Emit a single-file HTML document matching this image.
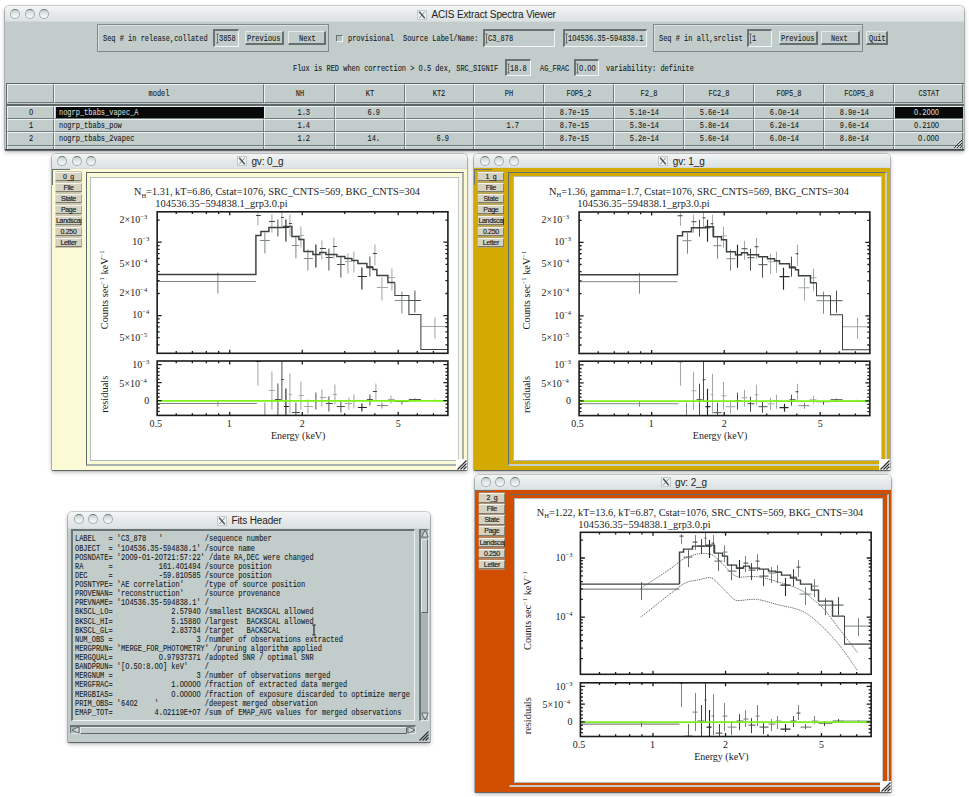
<!DOCTYPE html><html><head><meta charset="utf-8"><style>
*{margin:0;padding:0;box-sizing:border-box}
html,body{width:969px;height:797px;overflow:hidden;background:#fff;position:relative}
.abs{position:absolute}
.win{position:absolute;background:#c2cccb;box-shadow:0 0 0 0.6px rgba(60,70,70,.45),0 1px 1px rgba(0,0,0,.5),0 2px 5px rgba(0,0,0,.3);border-radius:4px 4px 0 0}
.tb{position:absolute;left:0;top:0;right:0;background:linear-gradient(#f4f6f6,#e6eaea 50%,#dde2e2);border-radius:4px 4px 0 0;border-bottom:1px solid #d3d9d9}
.tl{position:absolute;width:10px;height:10px;border-radius:50%;border:1px solid #a3acac;border-top-color:#6f7979;background:linear-gradient(#c9d0d0,#e9eeee 60%,#f6f8f8)}
.tt{position:absolute;font-family:"Liberation Sans",sans-serif;font-size:10px;letter-spacing:-0.12px;color:#222;white-space:nowrap}
.xi{position:absolute;width:10px;height:10px;border:1px solid #c3caca;background:#f0f3f3}
.xi svg{position:absolute;left:0;top:0}
.m{position:absolute;font-family:"Liberation Mono",monospace;font-size:9px;color:#151a1a;white-space:pre;line-height:9px;transform:scaleX(0.775);transform-origin:0 50%;-webkit-text-stroke:0.1px #151a1a}
.mc{transform-origin:50% 50%}
.cell{position:absolute;border-top:1px solid #eef2f2;border-left:1px solid #eef2f2;border-bottom:1px solid #6f7b7b;border-right:1px solid #6f7b7b;background:#c2cccb}
.btn{position:absolute;border-top:1px solid #e4eaea;border-left:1px solid #e4eaea;border-bottom:2px solid #66706f;border-right:2px solid #66706f;background:#c2cccb}
.inp{position:absolute;border-top:2px solid #6a7474;border-left:2px solid #6a7474;border-bottom:1px solid #f2f5f5;border-right:1px solid #f2f5f5;background:#c2cccb}
.grp{position:absolute;border:1.4px solid #7f8a8a;box-shadow:inset 1px 1px 0 #d9e0e0}
.gvb{position:absolute;background:#d6d2c2;border-top:1px solid #f4f2ea;border-left:1px solid #f4f2ea;border-bottom:1.2px solid #7f7b6c;border-right:1.2px solid #7f7b6c;box-shadow:0 0 0 0.6px #a9a596;font-family:"Liberation Sans",sans-serif;font-size:7px;letter-spacing:-0.3px;line-height:7.2px;text-align:center;color:#1a1a1a;overflow:visible;clip-path:inset(-3px 0.5px -3px 0.5px);white-space:nowrap;-webkit-text-stroke:0.15px #1a1a1a}
.ser{font-family:"Liberation Serif",serif}
</style></head><body>
<div class="win" style="left:4.5px;top:5.5px;width:959.5px;height:144.2px;"><div class="tb" style="height:16.4px"></div><div class="tl" style="left:5.7px;top:3.0px"></div><div class="tl" style="left:20.2px;top:3.0px"></div><div class="tl" style="left:34.7px;top:3.0px"></div><div class="xi" style="left:412.4px;top:4.0px"><svg width="8" height="8"><path d="M1.2 0.8L6.8 7.2" stroke="#505656" stroke-width="1.5"/><path d="M6.8 0.8L1.2 7.2" stroke="#505656" stroke-width="0.7"/></svg></div><div class="tt" style="left:426.9px;top:1.3px;line-height:16px">ACIS Extract Spectra Viewer</div><div class="grp" style="left:92.9px;top:18.2px;width:231.6px;height:28.1px;"></div><div class="m" style="left:98.7px;top:29.2px;">Seq # in release,collated</div><div class="inp" style="left:208.5px;top:23.3px;width:25.5px;height:18.2px;"></div><div class="m" style="left:214.3px;top:29.5px;">3858</div><div class="btn" style="left:240.9px;top:25.5px;width:38.2px;height:14.0px;"></div><div class="m" style="left:242.8px;top:29.5px;">Previous</div><div class="btn" style="left:283.5px;top:25.5px;width:38.4px;height:14.0px;"></div><div class="m" style="left:294.3px;top:29.5px;">Next</div><div class="inp" style="left:331.3px;top:29.1px;width:7.2px;height:7.0px;border-width:1.5px 1px 1px 1.5px;background:#b4bebe"></div><div class="m" style="left:343.0px;top:29.2px;">provisional</div><div class="m" style="left:398.3px;top:29.2px;">Source Label/Name:</div><div class="inp" style="left:478.1px;top:23.5px;width:72.0px;height:17.8px;"></div><div class="m" style="left:483.3px;top:29.5px;">C3_878</div><div class="inp" style="left:558.4px;top:23.5px;width:84.4px;height:17.8px;"></div><div class="m" style="left:563.3px;top:29.5px;">1O4536.35-594838.1</div><div class="grp" style="left:648.2px;top:18.5px;width:210.1px;height:28.2px;"></div><div class="m" style="left:654.0px;top:29.2px;">Seq # in all,srclist</div><div class="inp" style="left:742.3px;top:23.5px;width:25.2px;height:17.8px;"></div><div class="m" style="left:747.3px;top:29.5px;">1</div><div class="btn" style="left:774.1px;top:25.3px;width:39.0px;height:14.0px;"></div><div class="m" style="left:776.3px;top:29.3px;">Previous</div><div class="btn" style="left:816.5px;top:25.3px;width:39.0px;height:14.0px;"></div><div class="m" style="left:826.8px;top:29.3px;">Next</div><div class="btn" style="left:861.5px;top:25.3px;width:21.5px;height:14.0px;"></div><div class="m" style="left:864.8px;top:29.3px;">Quit</div><div class="m" style="left:288.3px;top:59.0px;">Flux is RED when correction &gt; O.5 dex, SRC_SIGNIF</div><div class="inp" style="left:500.5px;top:53.0px;width:26.0px;height:17.5px;"></div><div class="m" style="left:505.3px;top:59.0px;">18.8</div><div class="m" style="left:535.3px;top:59.0px;">AG_FRAC</div><div class="inp" style="left:569.0px;top:53.0px;width:25.5px;height:17.5px;"></div><div class="m" style="left:574.3px;top:59.0px;">O.OO</div><div class="m" style="left:601.3px;top:59.0px;">variability: definite</div><svg class="abs" style="left:210.0px;top:27.5px" width="5" height="11"><path d="M1.3 1H3.7M2.5 1V10M1.3 10H3.7" stroke="#3a4040" stroke-width="0.6" fill="none"/></svg><svg class="abs" style="left:479.0px;top:27.5px" width="5" height="11"><path d="M1.3 1H3.7M2.5 1V10M1.3 10H3.7" stroke="#3a4040" stroke-width="0.6" fill="none"/></svg><svg class="abs" style="left:559.0px;top:27.5px" width="5" height="11"><path d="M1.3 1H3.7M2.5 1V10M1.3 10H3.7" stroke="#3a4040" stroke-width="0.6" fill="none"/></svg><svg class="abs" style="left:743.0px;top:27.5px" width="5" height="11"><path d="M1.3 1H3.7M2.5 1V10M1.3 10H3.7" stroke="#3a4040" stroke-width="0.6" fill="none"/></svg><svg class="abs" style="left:501.5px;top:57.0px" width="5" height="11"><path d="M1.3 1H3.7M2.5 1V10M1.3 10H3.7" stroke="#3a4040" stroke-width="0.6" fill="none"/></svg><svg class="abs" style="left:570.0px;top:57.0px" width="5" height="11"><path d="M1.3 1H3.7M2.5 1V10M1.3 10H3.7" stroke="#3a4040" stroke-width="0.6" fill="none"/></svg><div class="abs" style="left:1.3px;top:77.1px;width:958.2px;height:67.1px;border-top:1px solid #5e6868;border-left:1.5px solid #5e6868;background:#c2cccb"></div><div class="cell" style="left:2.5px;top:78.1px;width:47.2px;height:19.6px;"></div><div class="cell" style="left:2.5px;top:100.1px;width:47.2px;height:13.4px;"></div><div class="cell" style="left:2.5px;top:113.5px;width:47.2px;height:13.4px;"></div><div class="cell" style="left:2.5px;top:126.9px;width:47.2px;height:13.2px;"></div><div class="cell" style="left:2.5px;top:140.1px;width:47.2px;height:4.1px;border-bottom:none;border-top-color:#d5dcdc"></div><div class="cell" style="left:49.7px;top:78.1px;width:210.2px;height:19.6px;"></div><div class="cell" style="left:49.7px;top:100.1px;width:210.2px;height:13.4px;"></div><div class="cell" style="left:49.7px;top:113.5px;width:210.2px;height:13.4px;"></div><div class="cell" style="left:49.7px;top:126.9px;width:210.2px;height:13.2px;"></div><div class="cell" style="left:49.7px;top:140.1px;width:210.2px;height:4.1px;border-bottom:none;border-top-color:#d5dcdc"></div><div class="cell" style="left:259.9px;top:78.1px;width:70.6px;height:19.6px;"></div><div class="cell" style="left:259.9px;top:100.1px;width:70.6px;height:13.4px;"></div><div class="cell" style="left:259.9px;top:113.5px;width:70.6px;height:13.4px;"></div><div class="cell" style="left:259.9px;top:126.9px;width:70.6px;height:13.2px;"></div><div class="cell" style="left:259.9px;top:140.1px;width:70.6px;height:4.1px;border-bottom:none;border-top-color:#d5dcdc"></div><div class="cell" style="left:330.5px;top:78.1px;width:69.5px;height:19.6px;"></div><div class="cell" style="left:330.5px;top:100.1px;width:69.5px;height:13.4px;"></div><div class="cell" style="left:330.5px;top:113.5px;width:69.5px;height:13.4px;"></div><div class="cell" style="left:330.5px;top:126.9px;width:69.5px;height:13.2px;"></div><div class="cell" style="left:330.5px;top:140.1px;width:69.5px;height:4.1px;border-bottom:none;border-top-color:#d5dcdc"></div><div class="cell" style="left:400.0px;top:78.1px;width:69.5px;height:19.6px;"></div><div class="cell" style="left:400.0px;top:100.1px;width:69.5px;height:13.4px;"></div><div class="cell" style="left:400.0px;top:113.5px;width:69.5px;height:13.4px;"></div><div class="cell" style="left:400.0px;top:126.9px;width:69.5px;height:13.2px;"></div><div class="cell" style="left:400.0px;top:140.1px;width:69.5px;height:4.1px;border-bottom:none;border-top-color:#d5dcdc"></div><div class="cell" style="left:469.5px;top:78.1px;width:69.5px;height:19.6px;"></div><div class="cell" style="left:469.5px;top:100.1px;width:69.5px;height:13.4px;"></div><div class="cell" style="left:469.5px;top:113.5px;width:69.5px;height:13.4px;"></div><div class="cell" style="left:469.5px;top:126.9px;width:69.5px;height:13.2px;"></div><div class="cell" style="left:469.5px;top:140.1px;width:69.5px;height:4.1px;border-bottom:none;border-top-color:#d5dcdc"></div><div class="cell" style="left:539.0px;top:78.1px;width:70.3px;height:19.6px;"></div><div class="cell" style="left:539.0px;top:100.1px;width:70.3px;height:13.4px;"></div><div class="cell" style="left:539.0px;top:113.5px;width:70.3px;height:13.4px;"></div><div class="cell" style="left:539.0px;top:126.9px;width:70.3px;height:13.2px;"></div><div class="cell" style="left:539.0px;top:140.1px;width:70.3px;height:4.1px;border-bottom:none;border-top-color:#d5dcdc"></div><div class="cell" style="left:609.3px;top:78.1px;width:69.8px;height:19.6px;"></div><div class="cell" style="left:609.3px;top:100.1px;width:69.8px;height:13.4px;"></div><div class="cell" style="left:609.3px;top:113.5px;width:69.8px;height:13.4px;"></div><div class="cell" style="left:609.3px;top:126.9px;width:69.8px;height:13.2px;"></div><div class="cell" style="left:609.3px;top:140.1px;width:69.8px;height:4.1px;border-bottom:none;border-top-color:#d5dcdc"></div><div class="cell" style="left:679.1px;top:78.1px;width:70.4px;height:19.6px;"></div><div class="cell" style="left:679.1px;top:100.1px;width:70.4px;height:13.4px;"></div><div class="cell" style="left:679.1px;top:113.5px;width:70.4px;height:13.4px;"></div><div class="cell" style="left:679.1px;top:126.9px;width:70.4px;height:13.2px;"></div><div class="cell" style="left:679.1px;top:140.1px;width:70.4px;height:4.1px;border-bottom:none;border-top-color:#d5dcdc"></div><div class="cell" style="left:749.5px;top:78.1px;width:69.6px;height:19.6px;"></div><div class="cell" style="left:749.5px;top:100.1px;width:69.6px;height:13.4px;"></div><div class="cell" style="left:749.5px;top:113.5px;width:69.6px;height:13.4px;"></div><div class="cell" style="left:749.5px;top:126.9px;width:69.6px;height:13.2px;"></div><div class="cell" style="left:749.5px;top:140.1px;width:69.6px;height:4.1px;border-bottom:none;border-top-color:#d5dcdc"></div><div class="cell" style="left:819.1px;top:78.1px;width:70.0px;height:19.6px;"></div><div class="cell" style="left:819.1px;top:100.1px;width:70.0px;height:13.4px;"></div><div class="cell" style="left:819.1px;top:113.5px;width:70.0px;height:13.4px;"></div><div class="cell" style="left:819.1px;top:126.9px;width:70.0px;height:13.2px;"></div><div class="cell" style="left:819.1px;top:140.1px;width:70.0px;height:4.1px;border-bottom:none;border-top-color:#d5dcdc"></div><div class="cell" style="left:889.1px;top:78.1px;width:69.9px;height:19.6px;"></div><div class="cell" style="left:889.1px;top:100.1px;width:69.9px;height:13.4px;"></div><div class="cell" style="left:889.1px;top:113.5px;width:69.9px;height:13.4px;"></div><div class="cell" style="left:889.1px;top:126.9px;width:69.9px;height:13.2px;"></div><div class="cell" style="left:889.1px;top:140.1px;width:69.9px;height:4.1px;border-bottom:none;border-top-color:#d5dcdc"></div><div class="abs" style="left:0.0px;top:143.2px;width:959.5px;height:1.0px;background:#3e4646"></div><div class="abs" style="left:1.3px;top:98.7px;width:958.2px;height:1.6px;background:#5e6868"></div><div class="m mc" style="left:154.8px;top:84.1px;width:100px;margin-left:-50px;text-align:center">model</div><div class="m mc" style="left:295.2px;top:84.1px;width:100px;margin-left:-50px;text-align:center">NH</div><div class="m mc" style="left:365.2px;top:84.1px;width:100px;margin-left:-50px;text-align:center">KT</div><div class="m mc" style="left:434.8px;top:84.1px;width:100px;margin-left:-50px;text-align:center">KT2</div><div class="m mc" style="left:504.2px;top:84.1px;width:100px;margin-left:-50px;text-align:center">PH</div><div class="m mc" style="left:574.1px;top:84.1px;width:100px;margin-left:-50px;text-align:center">FOP5_2</div><div class="m mc" style="left:644.2px;top:84.1px;width:100px;margin-left:-50px;text-align:center">F2_8</div><div class="m mc" style="left:714.3px;top:84.1px;width:100px;margin-left:-50px;text-align:center">FC2_8</div><div class="m mc" style="left:784.3px;top:84.1px;width:100px;margin-left:-50px;text-align:center">FOP5_8</div><div class="m mc" style="left:854.1px;top:84.1px;width:100px;margin-left:-50px;text-align:center">FCOP5_8</div><div class="m mc" style="left:924.0px;top:84.1px;width:100px;margin-left:-50px;text-align:center">CSTAT</div><div class="m mc" style="left:26.1px;top:103.0px;width:100px;margin-left:-50px;text-align:center;color:#151a1a;-webkit-text-stroke-color:#151a1a">O</div><div class="abs" style="left:51.2px;top:101.1px;width:208.2px;height:11.9px;background:#080a0a"></div><div class="m" style="left:54.5px;top:103.0px;color:#d0d4d4;-webkit-text-stroke-color:#d0d4d4">nogrp_tbabs_vapec_A</div><div class="m" style="left:305.5px;top:103.0px;width:80px;margin-left:-80px;text-align:right;transform-origin:100% 50%;color:#151a1a;-webkit-text-stroke-color:#151a1a">1.3</div><div class="m" style="left:375.0px;top:103.0px;width:80px;margin-left:-80px;text-align:right;transform-origin:100% 50%;color:#151a1a;-webkit-text-stroke-color:#151a1a">6.9</div><div class="m" style="left:584.3px;top:103.0px;width:80px;margin-left:-80px;text-align:right;transform-origin:100% 50%;color:#151a1a;-webkit-text-stroke-color:#151a1a">8.7e-15</div><div class="m" style="left:654.1px;top:103.0px;width:80px;margin-left:-80px;text-align:right;transform-origin:100% 50%;color:#151a1a;-webkit-text-stroke-color:#151a1a">5.1e-14</div><div class="m" style="left:724.5px;top:103.0px;width:80px;margin-left:-80px;text-align:right;transform-origin:100% 50%;color:#151a1a;-webkit-text-stroke-color:#151a1a">5.6e-14</div><div class="m" style="left:794.1px;top:103.0px;width:80px;margin-left:-80px;text-align:right;transform-origin:100% 50%;color:#151a1a;-webkit-text-stroke-color:#151a1a">6.Oe-14</div><div class="m" style="left:864.1px;top:103.0px;width:80px;margin-left:-80px;text-align:right;transform-origin:100% 50%;color:#151a1a;-webkit-text-stroke-color:#151a1a">8.9e-14</div><div class="abs" style="left:890.6px;top:101.1px;width:67.9px;height:11.9px;background:#080a0a"></div><div class="m" style="left:934.0px;top:103.0px;width:80px;margin-left:-80px;text-align:right;transform-origin:100% 50%;color:#d0d4d4;-webkit-text-stroke-color:#d0d4d4">O.2OOO</div><div class="m mc" style="left:26.1px;top:116.4px;width:100px;margin-left:-50px;text-align:center;color:#151a1a;-webkit-text-stroke-color:#151a1a">1</div><div class="m" style="left:54.5px;top:116.4px;color:#151a1a;-webkit-text-stroke-color:#151a1a">nogrp_tbabs_pow</div><div class="m" style="left:305.5px;top:116.4px;width:80px;margin-left:-80px;text-align:right;transform-origin:100% 50%;color:#151a1a;-webkit-text-stroke-color:#151a1a">1.4</div><div class="m" style="left:514.0px;top:116.4px;width:80px;margin-left:-80px;text-align:right;transform-origin:100% 50%;color:#151a1a;-webkit-text-stroke-color:#151a1a">1.7</div><div class="m" style="left:584.3px;top:116.4px;width:80px;margin-left:-80px;text-align:right;transform-origin:100% 50%;color:#151a1a;-webkit-text-stroke-color:#151a1a">8.7e-15</div><div class="m" style="left:654.1px;top:116.4px;width:80px;margin-left:-80px;text-align:right;transform-origin:100% 50%;color:#151a1a;-webkit-text-stroke-color:#151a1a">5.3e-14</div><div class="m" style="left:724.5px;top:116.4px;width:80px;margin-left:-80px;text-align:right;transform-origin:100% 50%;color:#151a1a;-webkit-text-stroke-color:#151a1a">5.8e-14</div><div class="m" style="left:794.1px;top:116.4px;width:80px;margin-left:-80px;text-align:right;transform-origin:100% 50%;color:#151a1a;-webkit-text-stroke-color:#151a1a">6.2e-14</div><div class="m" style="left:864.1px;top:116.4px;width:80px;margin-left:-80px;text-align:right;transform-origin:100% 50%;color:#151a1a;-webkit-text-stroke-color:#151a1a">9.6e-14</div><div class="m" style="left:934.0px;top:116.4px;width:80px;margin-left:-80px;text-align:right;transform-origin:100% 50%;color:#151a1a;-webkit-text-stroke-color:#151a1a">O.21OO</div><div class="m mc" style="left:26.1px;top:129.7px;width:100px;margin-left:-50px;text-align:center;color:#151a1a;-webkit-text-stroke-color:#151a1a">2</div><div class="m" style="left:54.5px;top:129.7px;color:#151a1a;-webkit-text-stroke-color:#151a1a">nogrp_tbabs_2vapec</div><div class="m" style="left:305.5px;top:129.7px;width:80px;margin-left:-80px;text-align:right;transform-origin:100% 50%;color:#151a1a;-webkit-text-stroke-color:#151a1a">1.2</div><div class="m" style="left:375.0px;top:129.7px;width:80px;margin-left:-80px;text-align:right;transform-origin:100% 50%;color:#151a1a;-webkit-text-stroke-color:#151a1a">14.</div><div class="m" style="left:444.5px;top:129.7px;width:80px;margin-left:-80px;text-align:right;transform-origin:100% 50%;color:#151a1a;-webkit-text-stroke-color:#151a1a">6.9</div><div class="m" style="left:584.3px;top:129.7px;width:80px;margin-left:-80px;text-align:right;transform-origin:100% 50%;color:#151a1a;-webkit-text-stroke-color:#151a1a">8.7e-15</div><div class="m" style="left:654.1px;top:129.7px;width:80px;margin-left:-80px;text-align:right;transform-origin:100% 50%;color:#151a1a;-webkit-text-stroke-color:#151a1a">5.2e-14</div><div class="m" style="left:724.5px;top:129.7px;width:80px;margin-left:-80px;text-align:right;transform-origin:100% 50%;color:#151a1a;-webkit-text-stroke-color:#151a1a">5.6e-14</div><div class="m" style="left:794.1px;top:129.7px;width:80px;margin-left:-80px;text-align:right;transform-origin:100% 50%;color:#151a1a;-webkit-text-stroke-color:#151a1a">6.Oe-14</div><div class="m" style="left:864.1px;top:129.7px;width:80px;margin-left:-80px;text-align:right;transform-origin:100% 50%;color:#151a1a;-webkit-text-stroke-color:#151a1a">8.8e-14</div><div class="m" style="left:934.0px;top:129.7px;width:80px;margin-left:-80px;text-align:right;transform-origin:100% 50%;color:#151a1a;-webkit-text-stroke-color:#151a1a">O.OOO</div><svg class="abs" style="left:948.5px;top:133.5px" width="10" height="10"><path d="M1 9L9 1M4 9L9 4M7 9L9 7" stroke="#333" stroke-width="1"/></svg></div>
<div class="win" style="left:51.6px;top:154px;width:415.4px;height:316px;background:transparent"><div class="abs" style="left:0;top:13.5px;right:0;bottom:0;background:#fafbd6"></div><div class="tb" style="height:14.5px"></div><div class="tl" style="left:5.7px;top:2px"></div><div class="tl" style="left:20.2px;top:2px"></div><div class="tl" style="left:34.7px;top:2px"></div><div class="xi" style="left:185.3px;top:2.05px"><svg width="8" height="8"><path d="M1.2 0.8L6.8 7.2" stroke="#505656" stroke-width="1.5"/><path d="M6.8 0.8L1.2 7.2" stroke="#505656" stroke-width="0.7"/></svg></div><div class="tt" style="left:199.8px;top:0.8px;line-height:14.5px">gv: 0_g</div><div class="abs" style="left:0;top:15px;width:18px;height:16px;border-top:1.5px solid #6b7373;border-left:1.5px solid #6b7373"></div><div class="gvb" style="left:3.4px;top:18px;width:27px;height:9.2px">0_g</div><div class="gvb" style="left:3.4px;top:29.03px;width:27px;height:9.2px">File</div><div class="gvb" style="left:3.4px;top:40.06px;width:27px;height:9.2px">State</div><div class="gvb" style="left:3.4px;top:51.09px;width:27px;height:9.2px">Page</div><div class="gvb" style="left:3.4px;top:62.12px;width:27px;height:9.2px">Landscape</div><div class="gvb" style="left:3.4px;top:73.15px;width:27px;height:9.2px">0.250</div><div class="gvb" style="left:3.4px;top:84.18px;width:27px;height:9.2px">Letter</div><div class="abs" style="left:34px;top:18.3px;width:378.8px;height:293.5px;border-top:1.8px solid #5f6868;border-left:1.8px solid #5f6868;border-bottom:2px solid #a9b1b0;border-right:2px solid #a9b1b0"></div><div class="abs" style="left:38.8px;top:22.6px;width:368.6px;height:284.9px;background:#fff;border-left:1px solid #b4bcbc;border-top:1px solid #b4bcbc;border-right:1px solid #c3caca;border-bottom:1px solid #b0b8b8"></div><svg class="abs" style="left:404.4px;top:305px" width="11" height="11"><rect width="11" height="11" fill="#fff"/><path d="M1.5 10.5L10.5 1.5M4.5 10.5L10.5 4.5M7.5 10.5L10.5 7.5" stroke="#2a2e2e" stroke-width="1.2"/></svg><svg class="abs" style="left:0;top:0" width="415.4" height="316" font-family="Liberation Serif" fill="#1a1d1d"><g transform="translate(-51.6 -154)"><text x="276.6" y="195" text-anchor="middle" font-size="10.3">N<tspan font-size="6.5" dy="2.5">H</tspan><tspan dy="-2.5">=</tspan>1.31, kT=6.86, Cstat=1076, SRC_CNTS=569, BKG_CNTS=304</text><text x="221.1" y="206.8" text-anchor="middle" font-size="10.45">104536.35&#8722;594838.1_grp3.0.pi</text><clipPath id="cm51"><rect x="156.75" y="211.8" width="290.75" height="141.5"/></clipPath><g clip-path="url(#cm51)" fill="none"><path d="M217.5 272.5V293.5" stroke="#7f8686" stroke-width="1.0"/><path d="M157.5 281.5H255.5" stroke="#7f8686" stroke-width="1.0"/><path d="M257.5 212.5V225.5" stroke="#a3a9a9" stroke-width="1.05"/><path d="M255.5 215.5H260.5" stroke="#3f4444" stroke-width="1.05"/><path d="M264.5 232.5V253.5" stroke="#7f8686" stroke-width="1.0"/><path d="M259.5 240.5H269.5" stroke="#7f8686" stroke-width="1.0"/><path d="M271.5 214.5V232.5" stroke="#a3a9a9" stroke-width="1.05"/><path d="M268.5 221.5H274.5" stroke="#3f4444" stroke-width="1.05"/><path d="M277.5 219.5V236.5" stroke="#4a5050" stroke-width="1.0"/><path d="M274.5 227.5H280.5" stroke="#4a5050" stroke-width="1.0"/><path d="M281.5 211.5V227.5" stroke="#a3a9a9" stroke-width="1.05"/><path d="M280.5 217.5H283.5" stroke="#3f4444" stroke-width="1.05"/><path d="M285.5 219.5V241.5" stroke="#222626" stroke-width="1.15"/><path d="M283.5 227.5H288.5" stroke="#222626" stroke-width="1.15"/><path d="M289.5 214.5V236.5" stroke="#a3a9a9" stroke-width="1.05"/><path d="M288.5 223.5H291.5" stroke="#3f4444" stroke-width="1.05"/><path d="M295.5 235.5V258.5" stroke="#7f8686" stroke-width="1.0"/><path d="M291.5 245.5H298.5" stroke="#7f8686" stroke-width="1.0"/><path d="M300.5 226.5V247.5" stroke="#a3a9a9" stroke-width="1.05"/><path d="M298.5 235.5H303.5" stroke="#a3a9a9" stroke-width="1.05"/><path d="M307.5 249.5V270.5" stroke="#7f8686" stroke-width="1.0"/><path d="M303.5 258.5H312.5" stroke="#7f8686" stroke-width="1.0"/><path d="M315.5 244.5V267.5" stroke="#222626" stroke-width="1.15"/><path d="M312.5 254.5H319.5" stroke="#222626" stroke-width="1.15"/><path d="M321.5 240.5V259.5" stroke="#a3a9a9" stroke-width="1.05"/><path d="M319.5 248.5H325.5" stroke="#3f4444" stroke-width="1.05"/><path d="M328.5 248.5V270.5" stroke="#4a5050" stroke-width="1.0"/><path d="M325.5 257.5H332.5" stroke="#4a5050" stroke-width="1.0"/><path d="M333.5 237.5V258.5" stroke="#a3a9a9" stroke-width="1.05"/><path d="M332.5 246.5H336.5" stroke="#3f4444" stroke-width="1.05"/><path d="M340.5 256.5V277.5" stroke="#4a5050" stroke-width="1.0"/><path d="M336.5 264.5H344.5" stroke="#4a5050" stroke-width="1.0"/><path d="M347.5 253.5V273.5" stroke="#a3a9a9" stroke-width="1.05"/><path d="M344.5 261.5H351.5" stroke="#a3a9a9" stroke-width="1.05"/><path d="M353.5 251.5V272.5" stroke="#a3a9a9" stroke-width="1.05"/><path d="M351.5 260.5H357.5" stroke="#3f4444" stroke-width="1.05"/><path d="M361.5 267.5V289.5" stroke="#222626" stroke-width="1.15"/><path d="M357.5 276.5H366.5" stroke="#222626" stroke-width="1.15"/><path d="M369.5 256.5V276.5" stroke="#4a5050" stroke-width="1.0"/><path d="M366.5 266.5H372.5" stroke="#4a5050" stroke-width="1.0"/><path d="M374.5 244.5V265.5" stroke="#a3a9a9" stroke-width="1.05"/><path d="M372.5 253.5H376.5" stroke="#3f4444" stroke-width="1.05"/><path d="M381.5 277.5V300.5" stroke="#a3a9a9" stroke-width="1.05"/><path d="M376.5 287.5H387.5" stroke="#a3a9a9" stroke-width="1.05"/><path d="M391.5 268.5V290.5" stroke="#a3a9a9" stroke-width="1.05"/><path d="M387.5 277.5H394.5" stroke="#a3a9a9" stroke-width="1.05"/><path d="M401.5 291.5V313.5" stroke="#7f8686" stroke-width="1.0"/><path d="M394.5 300.5H408.5" stroke="#7f8686" stroke-width="1.0"/><path d="M414.5 290.5V312.5" stroke="#4a5050" stroke-width="1.0"/><path d="M408.5 300.5H420.5" stroke="#4a5050" stroke-width="1.0"/><path d="M434.5 317.5V338.5" stroke="#a3a9a9" stroke-width="1.05"/><path d="M420.5 326.5H447.5" stroke="#a3a9a9" stroke-width="1.05"/><path d="M157.5 274.5H255.5V235.5H260.5V231.5H268.5V227.5H274.5V227.5H280.5V227.5H283.5V226.5H291.5V236.5H298.5V239.5H303.5V251.5H312.5V254.5H319.5V252.5H325.5V254.5H336.5V256.5H344.5V258.5H351.5V260.5H357.5V263.5H366.5V267.5H372.5V269.5H376.5V275.5H387.5V282.5H394.5" stroke="#3c4141" stroke-width="1.45"/><path d="M394.5 282.5V295.5H408.5V314.5H420.5V349.5H447.5" stroke="#3c4141" stroke-width="1.05"/></g><clipPath id="cr51"><rect x="156.75" y="361" width="290.75" height="54.4"/></clipPath><g clip-path="url(#cr51)" fill="none"><path d="M217.5 400.5V406.5" stroke="#7f8686" stroke-width="1.0"/><path d="M157.5 403.5H256.5" stroke="#7f8686" stroke-width="1.0"/><path d="M257.5 361.5V385.5" stroke="#a3a9a9" stroke-width="1.05"/><path d="M255.5 361.5H260.5" stroke="#3f4444" stroke-width="1.05"/><path d="M264.5 402.5V415.5" stroke="#7f8686" stroke-width="1.0"/><path d="M260.5 415.5H268.5" stroke="#7f8686" stroke-width="1.0"/><path d="M271.5 371.5V409.5" stroke="#a3a9a9" stroke-width="1.05"/><path d="M268.5 390.5H274.5" stroke="#a3a9a9" stroke-width="1.05"/><path d="M277.5 383.5V415.5" stroke="#4a5050" stroke-width="1.0"/><path d="M274.5 399.5H280.5" stroke="#4a5050" stroke-width="1.0"/><path d="M281.5 361.5V400.5" stroke="#4a5050" stroke-width="1.0"/><path d="M280.5 379.5H283.5" stroke="#4a5050" stroke-width="1.0"/><path d="M285.5 388.5V415.5" stroke="#222626" stroke-width="1.15"/><path d="M283.5 406.5H288.5" stroke="#222626" stroke-width="1.15"/><path d="M289.5 373.5V413.5" stroke="#a3a9a9" stroke-width="1.05"/><path d="M288.5 394.5H291.5" stroke="#a3a9a9" stroke-width="1.05"/><path d="M295.5 402.5V415.5" stroke="#4a5050" stroke-width="1.0"/><path d="M291.5 412.5H299.5" stroke="#4a5050" stroke-width="1.0"/><path d="M300.5 381.5V409.5" stroke="#a3a9a9" stroke-width="1.05"/><path d="M298.5 395.5H303.5" stroke="#a3a9a9" stroke-width="1.05"/><path d="M307.5 399.5V413.5" stroke="#a3a9a9" stroke-width="1.05"/><path d="M303.5 406.5H312.5" stroke="#a3a9a9" stroke-width="1.05"/><path d="M315.5 392.5V409.5" stroke="#4a5050" stroke-width="1.0"/><path d="M312.5 400.5H319.5" stroke="#4a5050" stroke-width="1.0"/><path d="M321.5 389.5V406.5" stroke="#a3a9a9" stroke-width="1.05"/><path d="M319.5 397.5H325.5" stroke="#a3a9a9" stroke-width="1.05"/><path d="M328.5 396.5V411.5" stroke="#4a5050" stroke-width="1.0"/><path d="M325.5 403.5H332.5" stroke="#4a5050" stroke-width="1.0"/><path d="M334.5 384.5V404.5" stroke="#a3a9a9" stroke-width="1.05"/><path d="M332.5 394.5H336.5" stroke="#a3a9a9" stroke-width="1.05"/><path d="M340.5 401.5V412.5" stroke="#4a5050" stroke-width="1.0"/><path d="M336.5 406.5H344.5" stroke="#4a5050" stroke-width="1.0"/><path d="M348.5 397.5V409.5" stroke="#a3a9a9" stroke-width="1.05"/><path d="M344.5 403.5H351.5" stroke="#a3a9a9" stroke-width="1.05"/><path d="M353.5 394.5V408.5" stroke="#a3a9a9" stroke-width="1.05"/><path d="M351.5 400.5H357.5" stroke="#a3a9a9" stroke-width="1.05"/><path d="M361.5 403.5V411.5" stroke="#222626" stroke-width="1.15"/><path d="M357.5 407.5H366.5" stroke="#222626" stroke-width="1.15"/><path d="M369.5 394.5V405.5" stroke="#4a5050" stroke-width="1.0"/><path d="M366.5 399.5H372.5" stroke="#4a5050" stroke-width="1.0"/><path d="M375.5 383.5V399.5" stroke="#a3a9a9" stroke-width="1.05"/><path d="M372.5 391.5H376.5" stroke="#3f4444" stroke-width="1.05"/><path d="M381.5 402.5V408.5" stroke="#7f8686" stroke-width="1.0"/><path d="M376.5 405.5H387.5" stroke="#7f8686" stroke-width="1.0"/><path d="M390.5 395.5V403.5" stroke="#a3a9a9" stroke-width="1.05"/><path d="M387.5 399.5H394.5" stroke="#a3a9a9" stroke-width="1.05"/><path d="M401.5 400.5V404.5" stroke="#4a5050" stroke-width="1.0"/><path d="M394.5 401.5H408.5" stroke="#4a5050" stroke-width="1.0"/><path d="M414.5 398.5V400.5" stroke="#4a5050" stroke-width="1.0"/><path d="M408.5 399.5H420.5" stroke="#4a5050" stroke-width="1.0"/><path d="M434.5 399.5V401.5" stroke="#a3a9a9" stroke-width="1.05"/><path d="M419.5 400.5H447.5" stroke="#a3a9a9" stroke-width="1.05"/><path d="M156.75 400.9H447.5" stroke="#7cf218" stroke-width="1.7"/></g><rect x="156.75" y="211.8" width="290.75" height="141.5" fill="none" stroke="#1a1d1d" stroke-width="1.6"/><rect x="156.75" y="361" width="290.75" height="54.4" fill="none" stroke="#1a1d1d" stroke-width="1.6"/><path d="M175.84 211.8v2.2M175.84 353.3v-2.2M191.97 211.8v2.2M191.97 353.3v-2.2M205.95 211.8v2.2M205.95 353.3v-2.2M218.28 211.8v2.2M218.28 353.3v-2.2M229.31 211.8v3.5M229.31 353.3v-3.5M301.88 211.8v3.5M301.88 353.3v-3.5M344.32 211.8v2.2M344.32 353.3v-2.2M374.44 211.8v2.2M374.44 353.3v-2.2M397.8 211.8v3.5M397.8 353.3v-3.5M416.89 211.8v2.2M416.89 353.3v-2.2M433.02 211.8v2.2M433.02 353.3v-2.2M175.84 361v2.2M175.84 415.4v-2.2M191.97 361v2.2M191.97 415.4v-2.2M205.95 361v2.2M205.95 415.4v-2.2M218.28 361v2.2M218.28 415.4v-2.2M229.31 361v3.5M229.31 415.4v-3.5M301.88 361v3.5M301.88 415.4v-3.5M344.32 361v2.2M344.32 415.4v-2.2M374.44 361v2.2M374.44 415.4v-2.2M397.8 361v3.5M397.8 415.4v-3.5M416.89 361v2.2M416.89 415.4v-2.2M433.02 361v2.2M433.02 415.4v-2.2M156.75 344.81h2.5M447.5 344.81h-2.5M156.75 337.7h2.5M447.5 337.7h-2.5M156.75 331.88h2.5M447.5 331.88h-2.5M156.75 326.97h2.5M447.5 326.97h-2.5M156.75 322.71h2.5M447.5 322.71h-2.5M156.75 318.96h2.5M447.5 318.96h-2.5M156.75 315.6h4.5M447.5 315.6h-4.5M156.75 293.5h2.5M447.5 293.5h-2.5M156.75 280.58h2.5M447.5 280.58h-2.5M156.75 271.41h2.5M447.5 271.41h-2.5M156.75 264.3h2.5M447.5 264.3h-2.5M156.75 258.48h2.5M447.5 258.48h-2.5M156.75 253.57h2.5M447.5 253.57h-2.5M156.75 249.31h2.5M447.5 249.31h-2.5M156.75 245.56h2.5M447.5 245.56h-2.5M156.75 242.2h4.5M447.5 242.2h-4.5M156.75 220.1h2.5M447.5 220.1h-2.5M156.75 411.37h2.5M447.5 411.37h-2.5M156.75 407.78h2.5M447.5 407.78h-2.5M156.75 404.19h2.5M447.5 404.19h-2.5M156.75 400.6h4.5M447.5 400.6h-4.5M156.75 397.01h2.5M447.5 397.01h-2.5M156.75 393.42h2.5M447.5 393.42h-2.5M156.75 389.83h2.5M447.5 389.83h-2.5M156.75 386.24h2.5M447.5 386.24h-2.5M156.75 382.65h4.5M447.5 382.65h-4.5M156.75 379.06h2.5M447.5 379.06h-2.5M156.75 375.47h2.5M447.5 375.47h-2.5M156.75 371.88h2.5M447.5 371.88h-2.5M156.75 368.29h2.5M447.5 368.29h-2.5M156.75 364.7h4.5M447.5 364.7h-4.5" stroke="#1a1d1d" stroke-width="1.3" fill="none"/><text x="146.75" y="222.9" text-anchor="end" font-size="10">2&#215;10<tspan font-size="6.5" dy="-4">&#8722;3</tspan></text><text x="148.75" y="245" text-anchor="end" font-size="10">10<tspan font-size="6.5" dy="-4">&#8722;3</tspan></text><text x="146.75" y="267.1" text-anchor="end" font-size="10">5&#215;10<tspan font-size="6.5" dy="-4">&#8722;4</tspan></text><text x="146.75" y="296.3" text-anchor="end" font-size="10">2&#215;10<tspan font-size="6.5" dy="-4">&#8722;4</tspan></text><text x="148.75" y="318.4" text-anchor="end" font-size="10">10<tspan font-size="6.5" dy="-4">&#8722;4</tspan></text><text x="146.75" y="340.5" text-anchor="end" font-size="10">5&#215;10<tspan font-size="6.5" dy="-4">&#8722;5</tspan></text><text x="148.75" y="368.2" text-anchor="end" font-size="10">10<tspan font-size="6.5" dy="-4">&#8722;3</tspan></text><text x="146.45" y="387.05" text-anchor="end" font-size="10">5&#215;10<tspan font-size="6.5" dy="-4">&#8722;4</tspan></text><text x="148.75" y="404.1" text-anchor="end" font-size="10">0</text><text x="155.25" y="426.9" text-anchor="middle" font-size="10">0.5</text><text x="228.81" y="426.9" text-anchor="middle" font-size="10">1</text><text x="301.88" y="426.9" text-anchor="middle" font-size="10">2</text><text x="397.8" y="426.9" text-anchor="middle" font-size="10">5</text><text x="297.75" y="438.9" text-anchor="middle" font-size="10">Energy (keV)</text><text transform="translate(107.55 289.85) rotate(-90)" text-anchor="middle" font-size="10.35">Counts sec<tspan font-size="6.5" dy="-4">&#8722;1</tspan><tspan dy="4"> keV</tspan><tspan font-size="6.5" dy="-4">&#8722;1</tspan></text><text transform="translate(107.75 394.3) rotate(-90)" text-anchor="middle" font-size="10.45">residuals</text></g></svg></div>
<div class="win" style="left:474px;top:153.8px;width:416px;height:316.2px;background:transparent"><div class="abs" style="left:0;top:13.5px;right:0;bottom:0;background:#d3ab00"></div><div class="tb" style="height:14.5px"></div><div class="tl" style="left:5.7px;top:2px"></div><div class="tl" style="left:20.2px;top:2px"></div><div class="tl" style="left:34.7px;top:2px"></div><div class="xi" style="left:184.2px;top:2.05px"><svg width="8" height="8"><path d="M1.2 0.8L6.8 7.2" stroke="#505656" stroke-width="1.5"/><path d="M6.8 0.8L1.2 7.2" stroke="#505656" stroke-width="0.7"/></svg></div><div class="tt" style="left:198.7px;top:0.8px;line-height:14.5px">gv: 1_g</div><div class="abs" style="left:0;top:15px;width:18px;height:16px;border-top:1.5px solid #6b7373;border-left:1.5px solid #6b7373"></div><div class="gvb" style="left:3.4px;top:18px;width:27px;height:9.2px">1_g</div><div class="gvb" style="left:3.4px;top:29.03px;width:27px;height:9.2px">File</div><div class="gvb" style="left:3.4px;top:40.06px;width:27px;height:9.2px">State</div><div class="gvb" style="left:3.4px;top:51.09px;width:27px;height:9.2px">Page</div><div class="gvb" style="left:3.4px;top:62.12px;width:27px;height:9.2px">Landscape</div><div class="gvb" style="left:3.4px;top:73.15px;width:27px;height:9.2px">0.250</div><div class="gvb" style="left:3.4px;top:84.18px;width:27px;height:9.2px">Letter</div><div class="abs" style="left:34px;top:18.3px;width:379.4px;height:293.7px;border-top:1.8px solid #636d6d;border-left:1.8px solid #636d6d;border-bottom:2px solid #c4cccc;border-right:2px solid #c4cccc"></div><div class="abs" style="left:38.8px;top:22.6px;width:369.2px;height:285.1px;background:#fff;border-left:1px solid #b4bcbc;border-top:1px solid #b4bcbc;border-right:1px solid #c3caca;border-bottom:1px solid #b0b8b8"></div><svg class="abs" style="left:405px;top:305.2px" width="11" height="11"><rect width="11" height="11" fill="#fff"/><path d="M1.5 10.5L10.5 1.5M4.5 10.5L10.5 4.5M7.5 10.5L10.5 7.5" stroke="#2a2e2e" stroke-width="1.2"/></svg><svg class="abs" style="left:0;top:0" width="416" height="316.2" font-family="Liberation Serif" fill="#1a1d1d"><g transform="translate(-474 -153.8)"><text x="699" y="194.8" text-anchor="middle" font-size="10.3">N<tspan font-size="6.5" dy="2.5">H</tspan><tspan dy="-2.5">=</tspan>1.36, gamma=1.7, Cstat=1076, SRC_CNTS=569, BKG_CNTS=304</text><text x="643.5" y="206.6" text-anchor="middle" font-size="10.45">104536.35&#8722;594838.1_grp3.0.pi</text><clipPath id="cm474"><rect x="579.1" y="211.8" width="290.75" height="141.5"/></clipPath><g clip-path="url(#cm474)" fill="none"><path d="M639.5 272.5V293.5" stroke="#7f8686" stroke-width="1.0"/><path d="M579.5 281.5H677.5" stroke="#7f8686" stroke-width="1.0"/><path d="M680.5 212.5V225.5" stroke="#a3a9a9" stroke-width="1.05"/><path d="M677.5 215.5H682.5" stroke="#3f4444" stroke-width="1.05"/><path d="M687.5 232.5V253.5" stroke="#7f8686" stroke-width="1.0"/><path d="M682.5 240.5H691.5" stroke="#7f8686" stroke-width="1.0"/><path d="M693.5 214.5V232.5" stroke="#a3a9a9" stroke-width="1.05"/><path d="M691.5 221.5H696.5" stroke="#3f4444" stroke-width="1.05"/><path d="M699.5 219.5V236.5" stroke="#4a5050" stroke-width="1.0"/><path d="M696.5 227.5H702.5" stroke="#4a5050" stroke-width="1.0"/><path d="M703.5 211.5V227.5" stroke="#a3a9a9" stroke-width="1.05"/><path d="M702.5 217.5H705.5" stroke="#3f4444" stroke-width="1.05"/><path d="M707.5 219.5V241.5" stroke="#222626" stroke-width="1.15"/><path d="M705.5 227.5H710.5" stroke="#222626" stroke-width="1.15"/><path d="M712.5 214.5V236.5" stroke="#a3a9a9" stroke-width="1.05"/><path d="M710.5 223.5H713.5" stroke="#3f4444" stroke-width="1.05"/><path d="M717.5 235.5V258.5" stroke="#7f8686" stroke-width="1.0"/><path d="M713.5 245.5H721.5" stroke="#7f8686" stroke-width="1.0"/><path d="M723.5 226.5V247.5" stroke="#a3a9a9" stroke-width="1.05"/><path d="M721.5 235.5H726.5" stroke="#a3a9a9" stroke-width="1.05"/><path d="M730.5 249.5V270.5" stroke="#7f8686" stroke-width="1.0"/><path d="M726.5 258.5H735.5" stroke="#7f8686" stroke-width="1.0"/><path d="M737.5 244.5V267.5" stroke="#222626" stroke-width="1.15"/><path d="M735.5 254.5H741.5" stroke="#222626" stroke-width="1.15"/><path d="M744.5 240.5V259.5" stroke="#a3a9a9" stroke-width="1.05"/><path d="M741.5 248.5H747.5" stroke="#3f4444" stroke-width="1.05"/><path d="M750.5 248.5V270.5" stroke="#4a5050" stroke-width="1.0"/><path d="M747.5 257.5H754.5" stroke="#4a5050" stroke-width="1.0"/><path d="M756.5 237.5V258.5" stroke="#a3a9a9" stroke-width="1.05"/><path d="M754.5 246.5H758.5" stroke="#3f4444" stroke-width="1.05"/><path d="M762.5 256.5V277.5" stroke="#4a5050" stroke-width="1.0"/><path d="M758.5 264.5H767.5" stroke="#4a5050" stroke-width="1.0"/><path d="M770.5 253.5V273.5" stroke="#a3a9a9" stroke-width="1.05"/><path d="M767.5 261.5H774.5" stroke="#a3a9a9" stroke-width="1.05"/><path d="M776.5 251.5V272.5" stroke="#a3a9a9" stroke-width="1.05"/><path d="M774.5 260.5H779.5" stroke="#3f4444" stroke-width="1.05"/><path d="M783.5 267.5V289.5" stroke="#222626" stroke-width="1.15"/><path d="M779.5 276.5H789.5" stroke="#222626" stroke-width="1.15"/><path d="M791.5 256.5V276.5" stroke="#4a5050" stroke-width="1.0"/><path d="M789.5 266.5H795.5" stroke="#4a5050" stroke-width="1.0"/><path d="M797.5 244.5V265.5" stroke="#a3a9a9" stroke-width="1.05"/><path d="M795.5 253.5H798.5" stroke="#3f4444" stroke-width="1.05"/><path d="M804.5 277.5V300.5" stroke="#a3a9a9" stroke-width="1.05"/><path d="M798.5 287.5H809.5" stroke="#a3a9a9" stroke-width="1.05"/><path d="M813.5 268.5V290.5" stroke="#a3a9a9" stroke-width="1.05"/><path d="M809.5 277.5H816.5" stroke="#a3a9a9" stroke-width="1.05"/><path d="M823.5 291.5V313.5" stroke="#7f8686" stroke-width="1.0"/><path d="M816.5 300.5H830.5" stroke="#7f8686" stroke-width="1.0"/><path d="M836.5 290.5V312.5" stroke="#4a5050" stroke-width="1.0"/><path d="M830.5 300.5H842.5" stroke="#4a5050" stroke-width="1.0"/><path d="M857.5 317.5V338.5" stroke="#a3a9a9" stroke-width="1.05"/><path d="M842.5 326.5H869.5" stroke="#a3a9a9" stroke-width="1.05"/><path d="M579.5 274.5H677.5V235.5H682.5V231.5H691.5V227.5H696.5V227.5H702.5V227.5H705.5V226.5H713.5V236.5H721.5V239.5H726.5V251.5H735.5V254.5H741.5V252.5H747.5V254.5H758.5V256.5H767.5V258.5H774.5V260.5H779.5V263.5H789.5V267.5H795.5V269.5H798.5V275.5H810.5V282.5H816.5" stroke="#3c4141" stroke-width="1.45"/><path d="M816.5 282.5V295.5H830.5V314.5H842.5V349.5H869.5" stroke="#3c4141" stroke-width="1.05"/></g><clipPath id="cr474"><rect x="579.1" y="361" width="290.75" height="54.4"/></clipPath><g clip-path="url(#cr474)" fill="none"><path d="M639.5 400.5V406.5" stroke="#7f8686" stroke-width="1.0"/><path d="M579.5 403.5H678.5" stroke="#7f8686" stroke-width="1.0"/><path d="M680.5 361.5V385.5" stroke="#a3a9a9" stroke-width="1.05"/><path d="M677.5 361.5H682.5" stroke="#3f4444" stroke-width="1.05"/><path d="M686.5 402.5V415.5" stroke="#7f8686" stroke-width="1.0"/><path d="M682.5 415.5H691.5" stroke="#7f8686" stroke-width="1.0"/><path d="M693.5 371.5V409.5" stroke="#a3a9a9" stroke-width="1.05"/><path d="M691.5 390.5H696.5" stroke="#a3a9a9" stroke-width="1.05"/><path d="M699.5 383.5V415.5" stroke="#4a5050" stroke-width="1.0"/><path d="M696.5 399.5H702.5" stroke="#4a5050" stroke-width="1.0"/><path d="M703.5 361.5V400.5" stroke="#4a5050" stroke-width="1.0"/><path d="M702.5 379.5H705.5" stroke="#4a5050" stroke-width="1.0"/><path d="M707.5 388.5V415.5" stroke="#222626" stroke-width="1.15"/><path d="M705.5 406.5H710.5" stroke="#222626" stroke-width="1.15"/><path d="M712.5 373.5V413.5" stroke="#a3a9a9" stroke-width="1.05"/><path d="M710.5 394.5H713.5" stroke="#a3a9a9" stroke-width="1.05"/><path d="M717.5 402.5V415.5" stroke="#4a5050" stroke-width="1.0"/><path d="M713.5 412.5H721.5" stroke="#4a5050" stroke-width="1.0"/><path d="M723.5 381.5V409.5" stroke="#a3a9a9" stroke-width="1.05"/><path d="M721.5 395.5H726.5" stroke="#a3a9a9" stroke-width="1.05"/><path d="M730.5 399.5V413.5" stroke="#a3a9a9" stroke-width="1.05"/><path d="M725.5 406.5H735.5" stroke="#a3a9a9" stroke-width="1.05"/><path d="M737.5 392.5V409.5" stroke="#4a5050" stroke-width="1.0"/><path d="M735.5 400.5H741.5" stroke="#4a5050" stroke-width="1.0"/><path d="M744.5 389.5V406.5" stroke="#a3a9a9" stroke-width="1.05"/><path d="M741.5 397.5H747.5" stroke="#a3a9a9" stroke-width="1.05"/><path d="M750.5 396.5V411.5" stroke="#4a5050" stroke-width="1.0"/><path d="M747.5 403.5H754.5" stroke="#4a5050" stroke-width="1.0"/><path d="M756.5 384.5V404.5" stroke="#a3a9a9" stroke-width="1.05"/><path d="M754.5 394.5H758.5" stroke="#a3a9a9" stroke-width="1.05"/><path d="M762.5 401.5V412.5" stroke="#4a5050" stroke-width="1.0"/><path d="M758.5 406.5H767.5" stroke="#4a5050" stroke-width="1.0"/><path d="M770.5 397.5V409.5" stroke="#a3a9a9" stroke-width="1.05"/><path d="M767.5 403.5H774.5" stroke="#a3a9a9" stroke-width="1.05"/><path d="M776.5 394.5V408.5" stroke="#a3a9a9" stroke-width="1.05"/><path d="M774.5 400.5H779.5" stroke="#a3a9a9" stroke-width="1.05"/><path d="M784.5 403.5V411.5" stroke="#222626" stroke-width="1.15"/><path d="M779.5 407.5H788.5" stroke="#222626" stroke-width="1.15"/><path d="M791.5 394.5V405.5" stroke="#4a5050" stroke-width="1.0"/><path d="M789.5 399.5H795.5" stroke="#4a5050" stroke-width="1.0"/><path d="M797.5 383.5V399.5" stroke="#a3a9a9" stroke-width="1.05"/><path d="M795.5 391.5H798.5" stroke="#3f4444" stroke-width="1.05"/><path d="M804.5 402.5V408.5" stroke="#7f8686" stroke-width="1.0"/><path d="M798.5 405.5H809.5" stroke="#7f8686" stroke-width="1.0"/><path d="M813.5 395.5V403.5" stroke="#a3a9a9" stroke-width="1.05"/><path d="M809.5 399.5H816.5" stroke="#a3a9a9" stroke-width="1.05"/><path d="M823.5 400.5V404.5" stroke="#4a5050" stroke-width="1.0"/><path d="M816.5 401.5H830.5" stroke="#4a5050" stroke-width="1.0"/><path d="M836.5 398.5V400.5" stroke="#4a5050" stroke-width="1.0"/><path d="M830.5 399.5H842.5" stroke="#4a5050" stroke-width="1.0"/><path d="M856.5 399.5V401.5" stroke="#a3a9a9" stroke-width="1.05"/><path d="M841.5 400.5H869.5" stroke="#a3a9a9" stroke-width="1.05"/><path d="M579.1 400.9H869.85" stroke="#7cf218" stroke-width="1.7"/></g><rect x="579.1" y="211.8" width="290.75" height="141.5" fill="none" stroke="#1a1d1d" stroke-width="1.6"/><rect x="579.1" y="361" width="290.75" height="54.4" fill="none" stroke="#1a1d1d" stroke-width="1.6"/><path d="M598.19 211.8v2.2M598.19 353.3v-2.2M614.32 211.8v2.2M614.32 353.3v-2.2M628.3 211.8v2.2M628.3 353.3v-2.2M640.63 211.8v2.2M640.63 353.3v-2.2M651.66 211.8v3.5M651.66 353.3v-3.5M724.23 211.8v3.5M724.23 353.3v-3.5M766.67 211.8v2.2M766.67 353.3v-2.2M796.79 211.8v2.2M796.79 353.3v-2.2M820.15 211.8v3.5M820.15 353.3v-3.5M839.24 211.8v2.2M839.24 353.3v-2.2M855.37 211.8v2.2M855.37 353.3v-2.2M598.19 361v2.2M598.19 415.4v-2.2M614.32 361v2.2M614.32 415.4v-2.2M628.3 361v2.2M628.3 415.4v-2.2M640.63 361v2.2M640.63 415.4v-2.2M651.66 361v3.5M651.66 415.4v-3.5M724.23 361v3.5M724.23 415.4v-3.5M766.67 361v2.2M766.67 415.4v-2.2M796.79 361v2.2M796.79 415.4v-2.2M820.15 361v3.5M820.15 415.4v-3.5M839.24 361v2.2M839.24 415.4v-2.2M855.37 361v2.2M855.37 415.4v-2.2M579.1 344.81h2.5M869.85 344.81h-2.5M579.1 337.7h2.5M869.85 337.7h-2.5M579.1 331.88h2.5M869.85 331.88h-2.5M579.1 326.97h2.5M869.85 326.97h-2.5M579.1 322.71h2.5M869.85 322.71h-2.5M579.1 318.96h2.5M869.85 318.96h-2.5M579.1 315.6h4.5M869.85 315.6h-4.5M579.1 293.5h2.5M869.85 293.5h-2.5M579.1 280.58h2.5M869.85 280.58h-2.5M579.1 271.41h2.5M869.85 271.41h-2.5M579.1 264.3h2.5M869.85 264.3h-2.5M579.1 258.48h2.5M869.85 258.48h-2.5M579.1 253.57h2.5M869.85 253.57h-2.5M579.1 249.31h2.5M869.85 249.31h-2.5M579.1 245.56h2.5M869.85 245.56h-2.5M579.1 242.2h4.5M869.85 242.2h-4.5M579.1 220.1h2.5M869.85 220.1h-2.5M579.1 411.37h2.5M869.85 411.37h-2.5M579.1 407.78h2.5M869.85 407.78h-2.5M579.1 404.19h2.5M869.85 404.19h-2.5M579.1 400.6h4.5M869.85 400.6h-4.5M579.1 397.01h2.5M869.85 397.01h-2.5M579.1 393.42h2.5M869.85 393.42h-2.5M579.1 389.83h2.5M869.85 389.83h-2.5M579.1 386.24h2.5M869.85 386.24h-2.5M579.1 382.65h4.5M869.85 382.65h-4.5M579.1 379.06h2.5M869.85 379.06h-2.5M579.1 375.47h2.5M869.85 375.47h-2.5M579.1 371.88h2.5M869.85 371.88h-2.5M579.1 368.29h2.5M869.85 368.29h-2.5M579.1 364.7h4.5M869.85 364.7h-4.5" stroke="#1a1d1d" stroke-width="1.3" fill="none"/><text x="569.1" y="222.9" text-anchor="end" font-size="10">2&#215;10<tspan font-size="6.5" dy="-4">&#8722;3</tspan></text><text x="571.1" y="245" text-anchor="end" font-size="10">10<tspan font-size="6.5" dy="-4">&#8722;3</tspan></text><text x="569.1" y="267.1" text-anchor="end" font-size="10">5&#215;10<tspan font-size="6.5" dy="-4">&#8722;4</tspan></text><text x="569.1" y="296.3" text-anchor="end" font-size="10">2&#215;10<tspan font-size="6.5" dy="-4">&#8722;4</tspan></text><text x="571.1" y="318.4" text-anchor="end" font-size="10">10<tspan font-size="6.5" dy="-4">&#8722;4</tspan></text><text x="569.1" y="340.5" text-anchor="end" font-size="10">5&#215;10<tspan font-size="6.5" dy="-4">&#8722;5</tspan></text><text x="571.1" y="368.2" text-anchor="end" font-size="10">10<tspan font-size="6.5" dy="-4">&#8722;3</tspan></text><text x="568.8" y="387.05" text-anchor="end" font-size="10">5&#215;10<tspan font-size="6.5" dy="-4">&#8722;4</tspan></text><text x="571.1" y="404.1" text-anchor="end" font-size="10">0</text><text x="577.6" y="426.9" text-anchor="middle" font-size="10">0.5</text><text x="651.16" y="426.9" text-anchor="middle" font-size="10">1</text><text x="724.23" y="426.9" text-anchor="middle" font-size="10">2</text><text x="820.15" y="426.9" text-anchor="middle" font-size="10">5</text><text x="720.1" y="438.9" text-anchor="middle" font-size="10">Energy (keV)</text><text transform="translate(529.9 289.85) rotate(-90)" text-anchor="middle" font-size="10.35">Counts sec<tspan font-size="6.5" dy="-4">&#8722;1</tspan><tspan dy="4"> keV</tspan><tspan font-size="6.5" dy="-4">&#8722;1</tspan></text><text transform="translate(530.1 394.3) rotate(-90)" text-anchor="middle" font-size="10.45">residuals</text></g></svg></div>
<div class="win" style="left:475px;top:475.4px;width:416.3px;height:316.2px;background:transparent"><div class="abs" style="left:0;top:13.5px;right:0;bottom:0;background:#d14e00"></div><div class="tb" style="height:14.5px"></div><div class="tl" style="left:5.7px;top:2px"></div><div class="tl" style="left:20.2px;top:2px"></div><div class="tl" style="left:34.7px;top:2px"></div><div class="xi" style="left:185.5px;top:2.05px"><svg width="8" height="8"><path d="M1.2 0.8L6.8 7.2" stroke="#505656" stroke-width="1.5"/><path d="M6.8 0.8L1.2 7.2" stroke="#505656" stroke-width="0.7"/></svg></div><div class="tt" style="left:200px;top:0.8px;line-height:14.5px">gv: 2_g</div><div class="abs" style="left:0;top:15px;width:18px;height:16px;border-top:1.5px solid #6b7373;border-left:1.5px solid #6b7373"></div><div class="gvb" style="left:3.4px;top:18px;width:27px;height:9.2px">2_g</div><div class="gvb" style="left:3.4px;top:29.03px;width:27px;height:9.2px">File</div><div class="gvb" style="left:3.4px;top:40.06px;width:27px;height:9.2px">State</div><div class="gvb" style="left:3.4px;top:51.09px;width:27px;height:9.2px">Page</div><div class="gvb" style="left:3.4px;top:62.12px;width:27px;height:9.2px">Landscape</div><div class="gvb" style="left:3.4px;top:73.15px;width:27px;height:9.2px">0.250</div><div class="gvb" style="left:3.4px;top:84.18px;width:27px;height:9.2px">Letter</div><div class="abs" style="left:34px;top:18.3px;width:379.7px;height:293.7px;border-top:1.8px solid #636d6d;border-left:1.8px solid #636d6d;border-bottom:2px solid #c4cccc;border-right:2px solid #c4cccc"></div><div class="abs" style="left:38.8px;top:22.6px;width:369.5px;height:285.1px;background:#fff;border-left:1px solid #b4bcbc;border-top:1px solid #b4bcbc;border-right:1px solid #c3caca;border-bottom:1px solid #b0b8b8"></div><svg class="abs" style="left:405.3px;top:305.2px" width="11" height="11"><rect width="11" height="11" fill="#fff"/><path d="M1.5 10.5L10.5 1.5M4.5 10.5L10.5 4.5M7.5 10.5L10.5 7.5" stroke="#2a2e2e" stroke-width="1.2"/></svg><svg class="abs" style="left:0;top:0" width="416.3" height="316.2" font-family="Liberation Serif" fill="#1a1d1d"><g transform="translate(-475 -475.4)"><text x="700" y="516.4" text-anchor="middle" font-size="10.3">N<tspan font-size="6.5" dy="2.5">H</tspan><tspan dy="-2.5">=</tspan>1.22, kT=13.6, kT=6.87, Cstat=1076, SRC_CNTS=569, BKG_CNTS=304</text><text x="644.5" y="528.2" text-anchor="middle" font-size="10.45">104536.35&#8722;594838.1_grp3.0.pi</text><clipPath id="cm475"><rect x="580.4" y="532.7" width="290.75" height="142"/></clipPath><g clip-path="url(#cm475)" fill="none"><path d="M641.5 582.5V600.5" stroke="#606767" stroke-width="1.0"/><path d="M580.5 589.5H679.5" stroke="#606767" stroke-width="1.0"/><path d="M681.5 534.5V544.5" stroke="#7b8282" stroke-width="1.0"/><path d="M679.5 536.5H683.5" stroke="#3f4444" stroke-width="1.0"/><path d="M688.5 550.5V567.5" stroke="#606767" stroke-width="1.0"/><path d="M683.5 557.5H692.5" stroke="#606767" stroke-width="1.0"/><path d="M695.5 535.5V550.5" stroke="#7b8282" stroke-width="1.0"/><path d="M692.5 542.5H697.5" stroke="#3f4444" stroke-width="1.0"/><path d="M701.5 539.5V554.5" stroke="#3f4545" stroke-width="1.0"/><path d="M697.5 546.5H704.5" stroke="#3f4545" stroke-width="1.0"/><path d="M705.5 533.5V546.5" stroke="#7b8282" stroke-width="1.0"/><path d="M704.5 538.5H706.5" stroke="#3f4444" stroke-width="1.0"/><path d="M709.5 540.5V558.5" stroke="#222626" stroke-width="1.1"/><path d="M706.5 546.5H711.5" stroke="#222626" stroke-width="1.1"/><path d="M713.5 535.5V553.5" stroke="#7b8282" stroke-width="1.0"/><path d="M711.5 543.5H714.5" stroke="#3f4444" stroke-width="1.0"/><path d="M718.5 553.5V571.5" stroke="#606767" stroke-width="1.0"/><path d="M714.5 561.5H722.5" stroke="#606767" stroke-width="1.0"/><path d="M724.5 545.5V562.5" stroke="#7b8282" stroke-width="1.0"/><path d="M722.5 552.5H727.5" stroke="#7b8282" stroke-width="1.0"/><path d="M731.5 564.5V580.5" stroke="#606767" stroke-width="1.0"/><path d="M727.5 571.5H736.5" stroke="#606767" stroke-width="1.0"/><path d="M739.5 560.5V578.5" stroke="#222626" stroke-width="1.1"/><path d="M736.5 568.5H743.5" stroke="#222626" stroke-width="1.1"/><path d="M745.5 556.5V572.5" stroke="#7b8282" stroke-width="1.0"/><path d="M743.5 563.5H748.5" stroke="#3f4444" stroke-width="1.0"/><path d="M751.5 563.5V580.5" stroke="#3f4545" stroke-width="1.0"/><path d="M748.5 570.5H755.5" stroke="#3f4545" stroke-width="1.0"/><path d="M757.5 554.5V571.5" stroke="#7b8282" stroke-width="1.0"/><path d="M755.5 561.5H759.5" stroke="#3f4444" stroke-width="1.0"/><path d="M763.5 569.5V586.5" stroke="#3f4545" stroke-width="1.0"/><path d="M759.5 576.5H768.5" stroke="#3f4545" stroke-width="1.0"/><path d="M771.5 567.5V583.5" stroke="#7b8282" stroke-width="1.0"/><path d="M768.5 573.5H775.5" stroke="#7b8282" stroke-width="1.0"/><path d="M777.5 565.5V583.5" stroke="#7b8282" stroke-width="1.0"/><path d="M775.5 572.5H781.5" stroke="#3f4444" stroke-width="1.0"/><path d="M785.5 578.5V596.5" stroke="#222626" stroke-width="1.1"/><path d="M780.5 585.5H790.5" stroke="#222626" stroke-width="1.1"/><path d="M793.5 569.5V586.5" stroke="#3f4545" stroke-width="1.0"/><path d="M790.5 577.5H796.5" stroke="#3f4545" stroke-width="1.0"/><path d="M798.5 560.5V577.5" stroke="#7b8282" stroke-width="1.0"/><path d="M796.5 567.5H800.5" stroke="#3f4444" stroke-width="1.0"/><path d="M805.5 587.5V605.5" stroke="#7b8282" stroke-width="1.0"/><path d="M799.5 594.5H811.5" stroke="#7b8282" stroke-width="1.0"/><path d="M814.5 579.5V597.5" stroke="#7b8282" stroke-width="1.0"/><path d="M811.5 586.5H818.5" stroke="#7b8282" stroke-width="1.0"/><path d="M825.5 598.5V615.5" stroke="#606767" stroke-width="1.0"/><path d="M818.5 605.5H832.5" stroke="#606767" stroke-width="1.0"/><path d="M838.5 597.5V615.5" stroke="#3f4545" stroke-width="1.0"/><path d="M832.5 605.5H843.5" stroke="#3f4545" stroke-width="1.0"/><path d="M858.5 618.5V636.5" stroke="#7b8282" stroke-width="1.0"/><path d="M844.5 626.5H871.5" stroke="#7b8282" stroke-width="1.0"/><path d="M580.5 584.5H679.5" stroke="#3c4141" stroke-width="1.05"/><path d="M679.5 584.5V552.5H683.5V549.5H692.5V546.5H697.5V546.5H704.5V546.5H706.5V545.5H714.5V553.5H722.5V556.5H727.5V565.5H736.5V568.5H743.5V566.5H749.5V568.5H759.5V569.5H768.5V571.5H775.5V572.5H781.5V575.5H790.5V578.5H796.5V580.5H800.5V584.5H811.5V590.5H818.5V601.5H832.5V616.5H844.5" stroke="#3c4141" stroke-width="1.45"/><path d="M844.5 616.5V644.5H871.5" stroke="#3c4141" stroke-width="1.05"/><path d="M640.7 588.8C645.58 585.57 662.95 574.25 670 569.4C677.05 564.55 678.3 562.22 683 559.7C687.7 557.18 693.87 555.2 698.2 554.3C702.53 553.4 706.12 553.77 709 554.3C711.88 554.83 712.6 555.17 715.5 557.5C718.4 559.83 722.78 565.05 726.4 568.3C730.02 571.55 732.15 575.55 737.2 577C742.25 578.45 749.83 576.1 756.7 577C763.57 577.9 771.18 580.23 778.4 582.4C785.62 584.57 794.18 587.07 800 590C805.82 592.93 809.23 596.67 813.3 600C817.37 603.33 819.87 604.83 824.4 610C828.93 615.17 834.93 623.78 840.5 631C846.07 638.22 854.92 649.58 857.8 653.3" stroke="#4a5252" stroke-width="0.85" stroke-dasharray="1.3 0.9" fill="none"/><path d="M640.7 617.6C645.58 613.73 662.58 600.08 670 594.4C677.42 588.72 680.5 585.85 685.2 583.5C689.9 581.15 694.05 581.2 698.2 580.3C702.35 579.4 707.03 577.75 710.1 578.1C713.17 578.45 712.8 578.97 716.6 582.4C720.4 585.83 729.1 595.62 732.9 598.7C736.7 601.78 735.43 600.72 739.4 600.9C743.37 601.08 750.2 599.08 756.7 599.8C763.2 600.52 770.73 603.2 778.4 605.2C786.07 607.2 795.45 608.23 802.7 611.8C809.95 615.37 815.6 620.73 821.9 626.6C828.2 632.47 834.62 639.67 840.5 647C846.38 654.33 854.42 666.67 857.2 670.6" stroke="#4a5252" stroke-width="0.85" stroke-dasharray="1.3 0.9" fill="none"/></g><clipPath id="cr475"><rect x="580.4" y="683.2" width="290.75" height="53.7"/></clipPath><g clip-path="url(#cr475)" fill="none"><path d="M641.5 721.5V727.5" stroke="#606767" stroke-width="1.0"/><path d="M580.5 724.5H679.5" stroke="#606767" stroke-width="1.0"/><path d="M681.5 683.5V707.5" stroke="#7b8282" stroke-width="1.0"/><path d="M679.5 683.5H683.5" stroke="#3f4444" stroke-width="1.0"/><path d="M688.5 724.5V736.5" stroke="#606767" stroke-width="1.0"/><path d="M684.5 736.5H692.5" stroke="#606767" stroke-width="1.0"/><path d="M695.5 693.5V731.5" stroke="#7b8282" stroke-width="1.0"/><path d="M692.5 712.5H697.5" stroke="#7b8282" stroke-width="1.0"/><path d="M701.5 705.5V736.5" stroke="#3f4545" stroke-width="1.0"/><path d="M697.5 721.5H704.5" stroke="#3f4545" stroke-width="1.0"/><path d="M705.5 683.5V722.5" stroke="#3f4545" stroke-width="1.0"/><path d="M704.5 700.5H706.5" stroke="#3f4545" stroke-width="1.0"/><path d="M709.5 710.5V736.5" stroke="#222626" stroke-width="1.1"/><path d="M706.5 727.5H711.5" stroke="#222626" stroke-width="1.1"/><path d="M713.5 694.5V735.5" stroke="#7b8282" stroke-width="1.0"/><path d="M711.5 716.5H714.5" stroke="#7b8282" stroke-width="1.0"/><path d="M719.5 724.5V736.5" stroke="#3f4545" stroke-width="1.0"/><path d="M715.5 733.5H722.5" stroke="#3f4545" stroke-width="1.0"/><path d="M724.5 703.5V731.5" stroke="#7b8282" stroke-width="1.0"/><path d="M722.5 716.5H727.5" stroke="#7b8282" stroke-width="1.0"/><path d="M731.5 721.5V735.5" stroke="#7b8282" stroke-width="1.0"/><path d="M727.5 727.5H736.5" stroke="#7b8282" stroke-width="1.0"/><path d="M739.5 714.5V730.5" stroke="#3f4545" stroke-width="1.0"/><path d="M736.5 721.5H743.5" stroke="#3f4545" stroke-width="1.0"/><path d="M745.5 710.5V727.5" stroke="#7b8282" stroke-width="1.0"/><path d="M743.5 719.5H748.5" stroke="#7b8282" stroke-width="1.0"/><path d="M751.5 718.5V733.5" stroke="#3f4545" stroke-width="1.0"/><path d="M748.5 725.5H755.5" stroke="#3f4545" stroke-width="1.0"/><path d="M757.5 705.5V726.5" stroke="#7b8282" stroke-width="1.0"/><path d="M755.5 716.5H759.5" stroke="#7b8282" stroke-width="1.0"/><path d="M763.5 723.5V734.5" stroke="#3f4545" stroke-width="1.0"/><path d="M759.5 727.5H768.5" stroke="#3f4545" stroke-width="1.0"/><path d="M771.5 719.5V731.5" stroke="#7b8282" stroke-width="1.0"/><path d="M768.5 724.5H775.5" stroke="#7b8282" stroke-width="1.0"/><path d="M777.5 716.5V729.5" stroke="#7b8282" stroke-width="1.0"/><path d="M775.5 721.5H781.5" stroke="#7b8282" stroke-width="1.0"/><path d="M785.5 724.5V732.5" stroke="#222626" stroke-width="1.1"/><path d="M780.5 729.5H790.5" stroke="#222626" stroke-width="1.1"/><path d="M793.5 716.5V727.5" stroke="#3f4545" stroke-width="1.0"/><path d="M790.5 721.5H796.5" stroke="#3f4545" stroke-width="1.0"/><path d="M798.5 705.5V720.5" stroke="#7b8282" stroke-width="1.0"/><path d="M796.5 713.5H800.5" stroke="#3f4444" stroke-width="1.0"/><path d="M805.5 724.5V729.5" stroke="#606767" stroke-width="1.0"/><path d="M800.5 727.5H811.5" stroke="#606767" stroke-width="1.0"/><path d="M814.5 716.5V724.5" stroke="#7b8282" stroke-width="1.0"/><path d="M811.5 721.5H818.5" stroke="#7b8282" stroke-width="1.0"/><path d="M824.5 721.5V726.5" stroke="#3f4545" stroke-width="1.0"/><path d="M818.5 723.5H832.5" stroke="#3f4545" stroke-width="1.0"/><path d="M838.5 719.5V722.5" stroke="#3f4545" stroke-width="1.0"/><path d="M832.5 721.5H843.5" stroke="#3f4545" stroke-width="1.0"/><path d="M858.5 720.5V722.5" stroke="#7b8282" stroke-width="1.0"/><path d="M842.5 721.5H870.5" stroke="#7b8282" stroke-width="1.0"/><path d="M580.4 722.6H871.15" stroke="#7cf218" stroke-width="1.7"/></g><rect x="580.4" y="532.7" width="290.75" height="142" fill="none" stroke="#1a1d1d" stroke-width="1.6"/><rect x="580.4" y="683.2" width="290.75" height="53.7" fill="none" stroke="#1a1d1d" stroke-width="1.6"/><path d="M599.49 532.7v2.2M599.49 674.7v-2.2M615.62 532.7v2.2M615.62 674.7v-2.2M629.6 532.7v2.2M629.6 674.7v-2.2M641.93 532.7v2.2M641.93 674.7v-2.2M652.96 532.7v3.5M652.96 674.7v-3.5M725.53 532.7v3.5M725.53 674.7v-3.5M767.97 532.7v2.2M767.97 674.7v-2.2M798.09 532.7v2.2M798.09 674.7v-2.2M821.45 532.7v3.5M821.45 674.7v-3.5M840.54 532.7v2.2M840.54 674.7v-2.2M856.67 532.7v2.2M856.67 674.7v-2.2M599.49 683.2v2.2M599.49 736.9v-2.2M615.62 683.2v2.2M615.62 736.9v-2.2M629.6 683.2v2.2M629.6 736.9v-2.2M641.93 683.2v2.2M641.93 736.9v-2.2M652.96 683.2v3.5M652.96 736.9v-3.5M725.53 683.2v3.5M725.53 736.9v-3.5M767.97 683.2v2.2M767.97 736.9v-2.2M798.09 683.2v2.2M798.09 736.9v-2.2M821.45 683.2v3.5M821.45 736.9v-3.5M840.54 683.2v2.2M840.54 736.9v-2.2M856.67 683.2v2.2M856.67 736.9v-2.2M580.4 658.98h2.5M871.15 658.98h-2.5M580.4 648.55h2.5M871.15 648.55h-2.5M580.4 641.16h2.5M871.15 641.16h-2.5M580.4 635.42h2.5M871.15 635.42h-2.5M580.4 630.73h2.5M871.15 630.73h-2.5M580.4 626.77h2.5M871.15 626.77h-2.5M580.4 623.34h2.5M871.15 623.34h-2.5M580.4 620.31h2.5M871.15 620.31h-2.5M580.4 617.6h4.5M871.15 617.6h-4.5M580.4 599.78h2.5M871.15 599.78h-2.5M580.4 589.35h2.5M871.15 589.35h-2.5M580.4 581.96h2.5M871.15 581.96h-2.5M580.4 576.22h2.5M871.15 576.22h-2.5M580.4 571.53h2.5M871.15 571.53h-2.5M580.4 567.57h2.5M871.15 567.57h-2.5M580.4 564.14h2.5M871.15 564.14h-2.5M580.4 561.11h2.5M871.15 561.11h-2.5M580.4 558.4h4.5M871.15 558.4h-4.5M580.4 540.58h2.5M871.15 540.58h-2.5M580.4 732.98h2.5M871.15 732.98h-2.5M580.4 729.42h2.5M871.15 729.42h-2.5M580.4 725.86h2.5M871.15 725.86h-2.5M580.4 722.3h4.5M871.15 722.3h-4.5M580.4 718.74h2.5M871.15 718.74h-2.5M580.4 715.18h2.5M871.15 715.18h-2.5M580.4 711.62h2.5M871.15 711.62h-2.5M580.4 708.06h2.5M871.15 708.06h-2.5M580.4 704.5h4.5M871.15 704.5h-4.5M580.4 700.94h2.5M871.15 700.94h-2.5M580.4 697.38h2.5M871.15 697.38h-2.5M580.4 693.82h2.5M871.15 693.82h-2.5M580.4 690.26h2.5M871.15 690.26h-2.5M580.4 686.7h4.5M871.15 686.7h-4.5" stroke="#1a1d1d" stroke-width="1.3" fill="none"/><text x="572.4" y="561.2" text-anchor="end" font-size="10">10<tspan font-size="6.5" dy="-4">&#8722;3</tspan></text><text x="572.4" y="620.4" text-anchor="end" font-size="10">10<tspan font-size="6.5" dy="-4">&#8722;4</tspan></text><text x="572.4" y="690.2" text-anchor="end" font-size="10">10<tspan font-size="6.5" dy="-4">&#8722;3</tspan></text><text x="570.1" y="708.9" text-anchor="end" font-size="10">5&#215;10<tspan font-size="6.5" dy="-4">&#8722;4</tspan></text><text x="572.4" y="725.8" text-anchor="end" font-size="10">0</text><text x="578.9" y="748.4" text-anchor="middle" font-size="10">0.5</text><text x="652.46" y="748.4" text-anchor="middle" font-size="10">1</text><text x="725.53" y="748.4" text-anchor="middle" font-size="10">2</text><text x="821.45" y="748.4" text-anchor="middle" font-size="10">5</text><text x="721.4" y="760.4" text-anchor="middle" font-size="10">Energy (keV)</text><text transform="translate(531.2 611) rotate(-90)" text-anchor="middle" font-size="10.35">Counts sec<tspan font-size="6.5" dy="-4">&#8722;1</tspan><tspan dy="4"> keV</tspan><tspan font-size="6.5" dy="-4">&#8722;1</tspan></text><text transform="translate(531.4 716.15) rotate(-90)" text-anchor="middle" font-size="10.45">residuals</text></g></svg></div>
<div class="win" style="left:68.3px;top:511.9px;width:362.0px;height:230.3px;"><div class="tb" style="height:16.7px"></div><div class="tl" style="left:5.7px;top:2.2px"></div><div class="tl" style="left:20.2px;top:2.2px"></div><div class="tl" style="left:34.7px;top:2.2px"></div><div class="xi" style="left:148.6px;top:4.1px"><svg width="8" height="8"><path d="M1.2 0.8L6.8 7.2" stroke="#505656" stroke-width="1.5"/><path d="M6.8 0.8L1.2 7.2" stroke="#505656" stroke-width="0.7"/></svg></div><div class="tt" style="left:163.1px;top:1.3px;line-height:16px">Fits Header</div><div class="abs" style="left:2.7px;top:17.3px;width:344.5px;height:191.8px;border-top:2px solid #6a7474;border-left:2px solid #6a7474;border-bottom:1px solid #eef2f2;border-right:1px solid #eef2f2"></div><div class="m" style="left:6.5px;top:23.6px;line-height:9.13px">LABEL   = 'C3_878   '          /sequence number
OBJECT  = '1O4536.35-594838.1' /source name
POSNDATE= '2OO9-O1-2OT21:57:22' /date RA,DEC were changed
RA      =           161.4O1494 /source position
DEC     =           -59.81O585 /source position
POSNTYPE= 'AE correlation'     /type of source position
PROVENAN= 'reconstruction'     /source provenance
PREVNAME= '1O4536.35-594838.1' /
BKSCL_LO=              2.5794O /smallest BACKSCAL allowed
BKSCL_HI=              5.1588O /largest  BACKSCAL allowed
BKSCL_GL=              2.83734 /target   BACKSCAL
NUM_OBS =                    3 /number of observations extracted
MERGPRUN= 'MERGE_FOR_PHOTOMETRY' /pruning algorithm applied
MERGQUAL=           O.97937371 /adopted SNR / optimal SNR
BANDPRUN= '[O.5O:8.OO] keV'    /
MERGNUM =                    3 /number of observations merged
MERGFRAC=              1.OOOOO /fraction of extracted data merged
MERGBIAS=              O.OOOOO /fraction of exposure discarded to optimize merge
PRIM_OBS= '64O2    '           /deepest merged observation
EMAP_TOT=          4.O2119E+O7 /sum of EMAP_AVG values for merged observations</div><div class="abs" style="left:351.2px;top:16.9px;width:9.8px;height:192.2px;background:#aab4b4;border-left:2px solid #6d7777;border-top:1px solid #6d7777;border-right:1px solid #e2e8e8;border-bottom:1px solid #e2e8e8"></div><div class="abs" style="left:353.0px;top:26.9px;width:7.0px;height:74.2px;background:#c2cccb;border-top:1px solid #e6ecec;border-left:1px solid #e6ecec;border-bottom:1.5px solid #5f6969;border-right:1.5px solid #5f6969"></div><svg class="abs" style="left:352.7px;top:17.4px" width="8" height="9"><path d="M4 1L7.2 8H0.8Z" fill="#d5dcdc" stroke="#5a6464" stroke-width="0.9"/></svg><svg class="abs" style="left:352.7px;top:200.1px" width="8" height="9"><path d="M4 8L7.2 1H0.8Z" fill="#d5dcdc" stroke="#5a6464" stroke-width="0.9"/></svg><div class="abs" style="left:2.2px;top:212.9px;width:346.0px;height:9.6px;background:#aab4b4;border-top:2px solid #6d7777;border-left:1px solid #6d7777;border-right:1px solid #e2e8e8;border-bottom:1px solid #e2e8e8"></div><div class="abs" style="left:11.7px;top:214.7px;width:327.0px;height:7.0px;background:#c2cccb;border-top:1px solid #e6ecec;border-left:1px solid #e6ecec;border-bottom:1.5px solid #5f6969;border-right:1.5px solid #5f6969"></div><svg class="abs" style="left:3.0px;top:214.4px" width="9" height="8"><path d="M1 4L8 0.8V7.2Z" fill="#d5dcdc" stroke="#5a6464" stroke-width="0.9"/></svg><svg class="abs" style="left:339.0px;top:214.4px" width="9" height="8"><path d="M8 4L1 0.8V7.2Z" fill="#d5dcdc" stroke="#5a6464" stroke-width="0.9"/></svg><svg class="abs" style="left:350.2px;top:218.6px" width="11" height="11"><path d="M1.5 10.5L10.5 1.5M4.5 10.5L10.5 4.5M7.5 10.5L10.5 7.5" stroke="#2a2e2e" stroke-width="1.1"/></svg><svg class="abs" style="left:243.0px;top:112.1px" width="6" height="12"><path d="M1.3 1H4.7M3 1V11M1.3 11H4.7" stroke="#1f2424" stroke-width="1.1" fill="none"/></svg></div>
</body></html>
